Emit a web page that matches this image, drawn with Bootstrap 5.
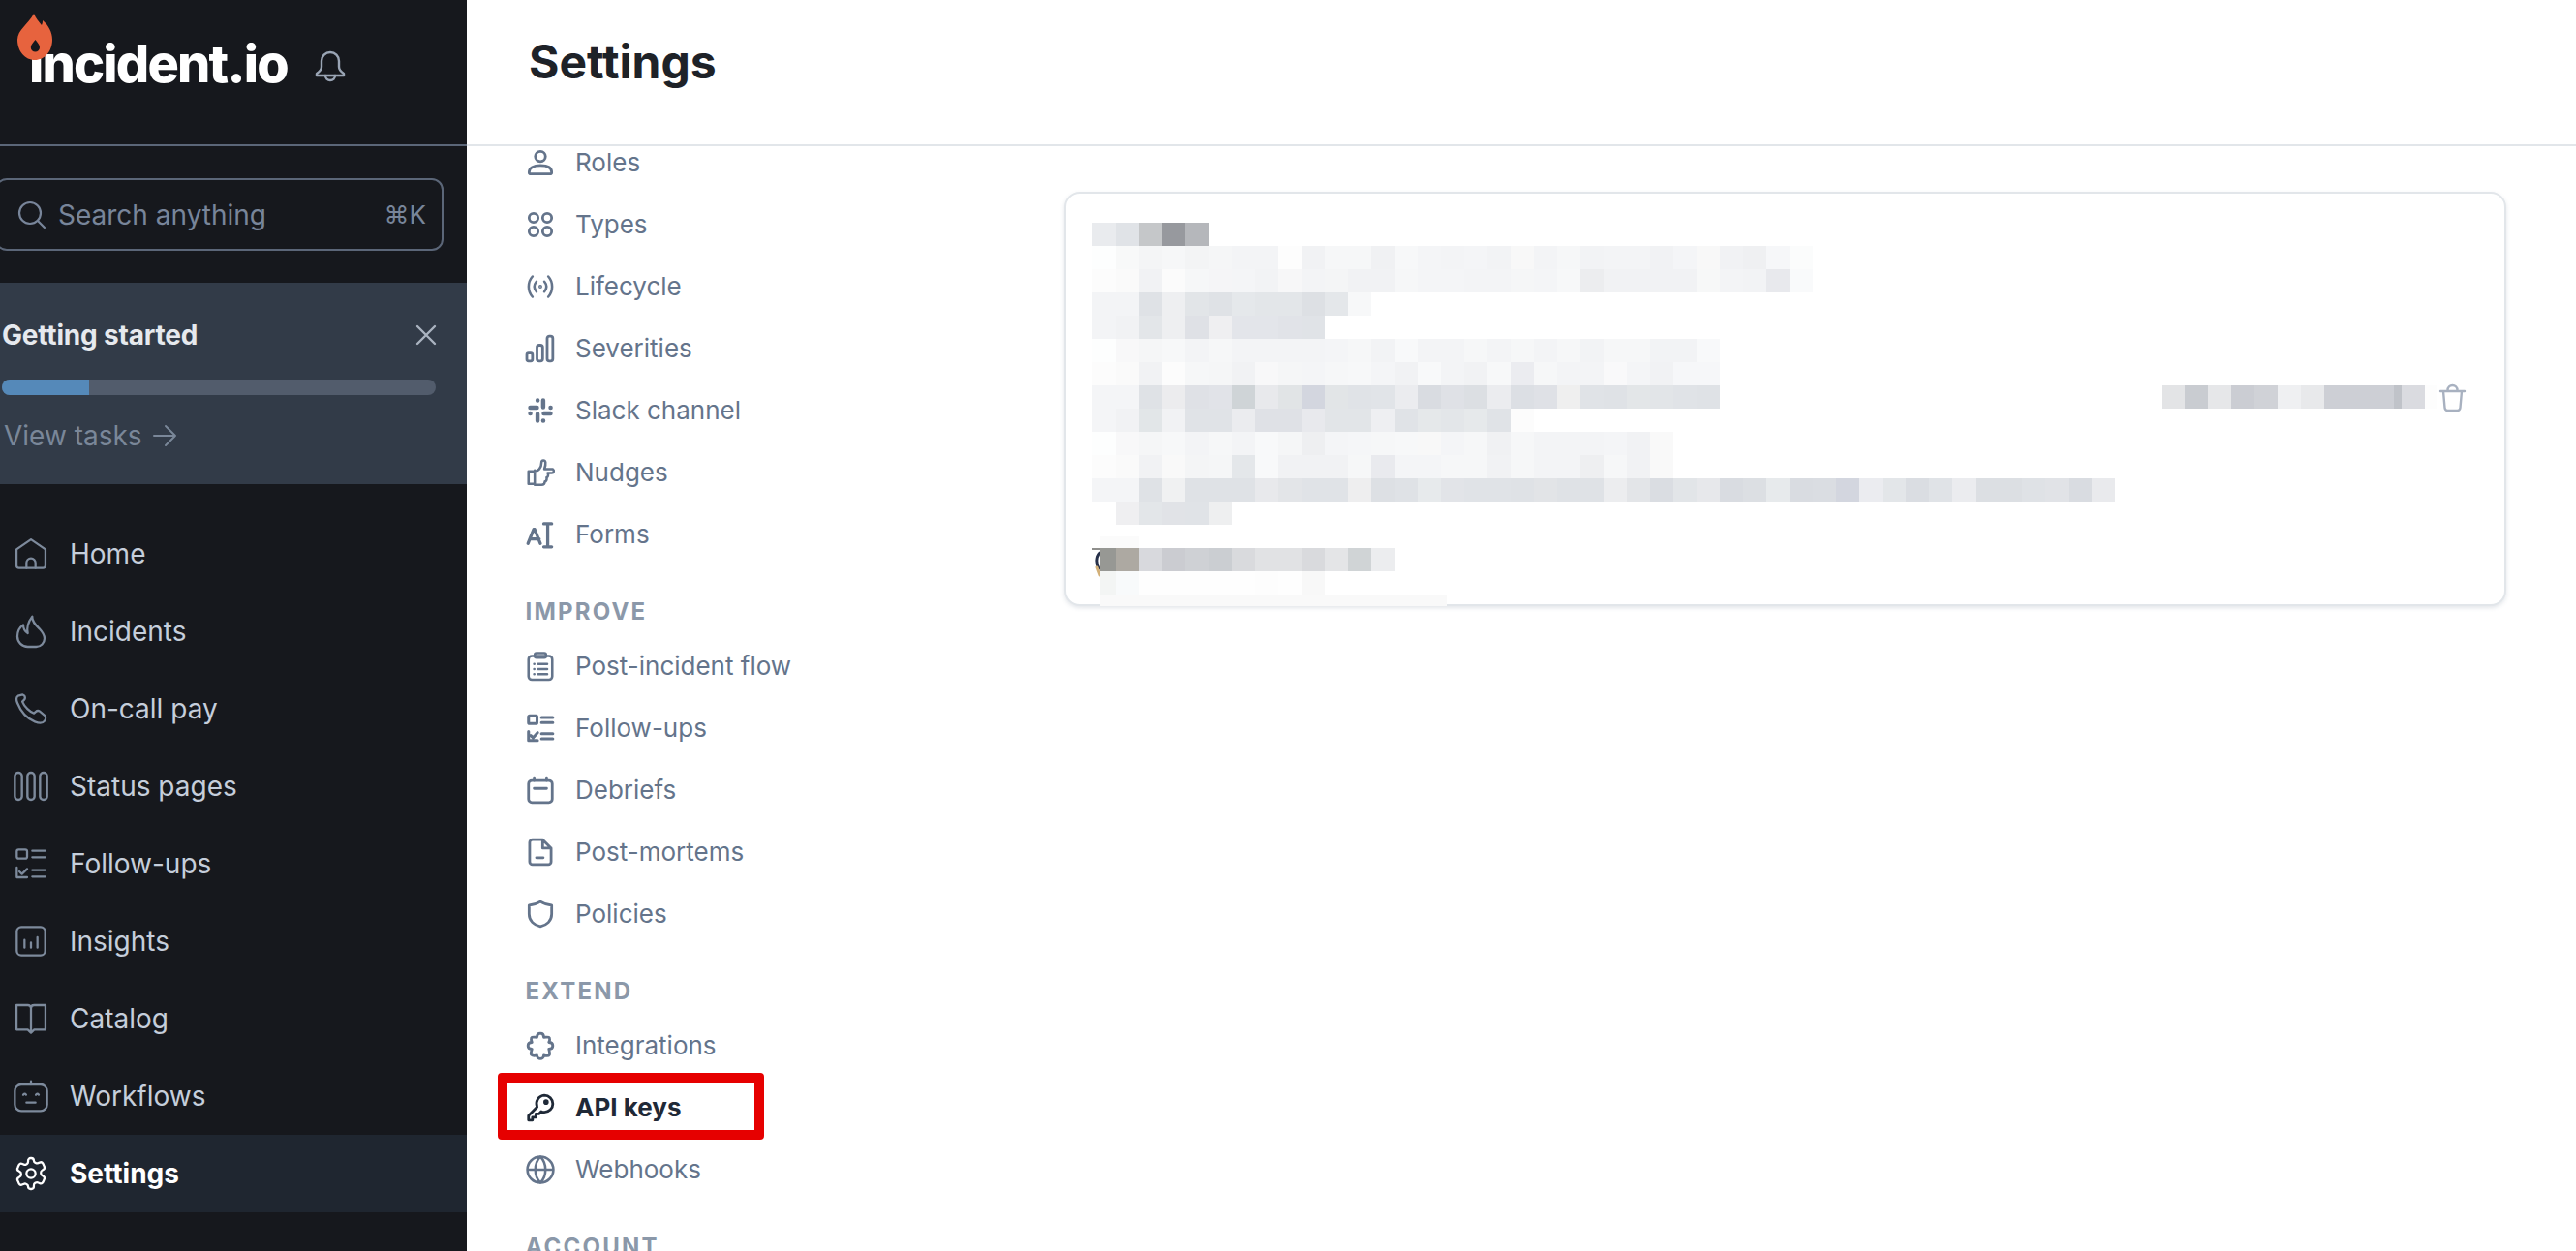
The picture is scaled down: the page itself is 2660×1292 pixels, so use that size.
<!DOCTYPE html>
<html lang="en">
<head>
<meta charset="utf-8">
<title>Settings</title>
<link href="https://cdn.jsdelivr.net/npm/bootstrap@5.3.0/dist/css/bootstrap.min.css" rel="stylesheet">
<style>
html,body{height:100%;overflow:hidden;background:#fff;font-family:Inter,"Noto Sans",sans-serif}
.app-shell{height:1292px}
svg{flex:none;overflow:visible;fill:none;stroke:currentColor;stroke-linecap:round;stroke-linejoin:round}
.side-bar{width:482px;background:#16181d;flex:none}
.side-head{height:151px;border-bottom:2px solid #5b6678;padding-left:30px;padding-top:32px}
.brand-name{font-size:54px;font-weight:800;letter-spacing:-1.8px;color:#fff;line-height:68px;width:268px;white-space:nowrap}
.brand-flame{position:absolute;left:-12px;top:-18px;width:36px;height:48px;stroke:none}
.bell-ico{width:32px;height:32px;color:#9aa5b5;margin-left:27px;margin-top:20px}
.search-box{height:75px;width:463px;margin:33px 0 33px -5px;border:2px solid #5b6678;border-radius:12px;padding:0 16px 0 22px;color:#78859a;font-size:28px}
.search-box svg{width:28px;height:28px;margin-right:13px}
.search-key{font-size:26px}
.start-panel{height:208px;background:#323b48;padding:33px 32px 0 2px}
.start-title{font-size:28px;font-weight:700;letter-spacing:-.2px;line-height:42px;color:#e6e9ee}
.start-close{width:24px;height:24px;color:#aab3c0;margin-right:-2px}
.start-track{height:16px;margin-top:25px;background:#525c6c;border-radius:8px;overflow:hidden}
.start-fill{height:100%;width:20%;background:#5589b9}
.start-link{font-size:28px;line-height:42px;margin-top:21px;padding-left:2px;color:#7a8799}
.start-link svg{width:26px;height:26px;margin-left:10px}
.side-links{margin-top:32px}
.side-row{height:80px;padding-left:16px;gap:24px;font-size:28px;color:#c5cedb}
.side-row svg{width:32px;height:32px;color:#7d8a9c}
.side-row.is-on{background:#1f2630;color:#fff;font-weight:700}
.side-row.is-on svg{color:#fff}
.main-pane{min-width:0}
.main-head{height:153px;border-bottom:2px solid #e2e6ea;padding:0 0 20px 64px;font-size:48px;font-weight:700;color:#1e2228}
.main-body{min-height:0;overflow:hidden}
.sub-nav{width:617px;flex:none;padding-left:62px;margin-top:-15px}
.sub-row{height:64px;gap:22px;font-size:26px;color:#64748b;position:relative}
.sub-row svg{width:28px;height:28px}
.sub-row.is-on{color:#1f2937;font-weight:700}
.sub-label{height:36px;margin:30px 0 6px -1.5px;line-height:36px;font-size:24px;font-weight:700;letter-spacing:2.2px;color:#8b98a9}
.mark-box{position:absolute;left:-30px;top:-4px;width:275px;height:69px;border:10px solid #e60000;border-radius:4px;box-shadow:inset 0 1px 0 #8d8d8d;pointer-events:none}
.key-panel{width:1489px;height:428px;margin-top:47px;background:#fff;border:2px solid #e2e6ea;border-radius:16px;box-shadow:0 2px 4px rgba(100,116,139,.18);padding:30px 0 0 27px}
.blur-row{height:24px}
.blur-cell{width:24px;height:100%;flex:none}
.blur-gap{height:12px}
.blur-faint{height:12px;width:40px;margin-left:8px;background:#fbfbfb}
.blur-foot{margin-left:8px}
.blur-tail{height:12px}
.trash-ico{width:27px;height:27px;color:#a8b1c0;margin:0 40px 0 3px}
.avatar-bit{position:absolute;left:-8px;top:0;width:8px;height:30px;overflow:hidden}
</style>
</head>
<body>
<div class="app-shell d-flex">
  <aside class="side-bar d-flex flex-column">
    <div class="side-head d-flex align-items-start">
      <div class="brand-name position-relative">incident.io
        <svg class="brand-flame" viewBox="0 0 36 48"><path fill="#e7633e" d="M17 0c2 5 5 8 8 12 .8-1.500 1-3 1-5 6 5 10 12 10 20 0 12-8 21-18 21S0 39 0 27C0 17 11 11 17 0Z"/><path fill="#16181d" d="M18.500 27c2.500 3 4.500 5.500 4.500 8a4.600 4.600 0 0 1-9.200 0c0-2.500 2.200-5 4.700-8Z"/></svg>
      </div>
      <svg class="bell-ico" viewBox="0 0 32 32" stroke-width="2.400"><path d="M16 2a9 9 0 0 0-9 9v6c0 3-2 5-5 7v2h28v-2c-3-2-5-4-5-7v-6a9 9 0 0 0-9-9Z"/><path d="M11 26a5 5 0 0 0 10 0"/></svg>
    </div>
    <div class="search-box d-flex align-items-center">
      <svg viewBox="0 0 28 28" stroke-width="2.200"><circle cx="12" cy="12" r="11"/><path d="m20 20 7 7"/></svg>
      <span class="flex-grow-1">Search anything</span>
      <span class="search-key">⌘K</span>
    </div>
    <div class="start-panel">
      <div class="d-flex justify-content-between align-items-center">
        <span class="start-title">Getting started</span>
        <svg class="start-close" viewBox="0 0 24 24" stroke-width="2.400"><path d="m3 3 18 18M21 3 3 21"/></svg>
      </div>
      <div class="start-track"><div class="start-fill"></div></div>
      <div class="start-link d-flex align-items-center">View tasks
        <svg viewBox="0 0 26 26" stroke-width="2"><path d="M2 13h22M14 3l10 10-10 10"/></svg>
      </div>
    </div>
    <nav class="side-links">
      <div class="side-row d-flex align-items-center"><svg viewBox="0 0 24 24" stroke-width="1.700"><path d="M.8 8.500 12 .8l11.200 7.700V21a2 2 0 0 1-2 2H2.800a2 2 0 0 1-2-2Z"/><path d="M8.500 23v-4a3.500 3.500 0 0 1 7 0v4"/></svg>Home</div>
      <div class="side-row d-flex align-items-center"><svg viewBox="0 0 24 24" stroke-width="1.700"><path d="M13 .5c-.5 3.500 2.500 6.500 5.500 9.500 2.200 2.400 4 4.500 4 7.500A6.500 6.500 0 0 1 16 24H9.500a8 8 0 0 1-8-8C1.500 12 3 9 6 7c0 3 1 5 3.500 6.500C8.500 9 10 4.500 13 .5Z"/></svg>Incidents</div>
      <div class="side-row d-flex align-items-center"><svg viewBox="0 0 24 24" stroke-width="1.700"><path d="M5.500 1 2 2c-1.500 1-1.500 3-.5 5.500 2.500 6.500 7.500 12 13.500 14.500 3 1.200 6 1.500 7.500-.5.800-1 1.200-3 .3-4.200l-4-3.300c-1-.7-2.300-.5-3.200.3l-1.300 1.200c-3-1-7.500-5-9-9l1.500-1.500c.7-.8.700-2 .2-3L5.500 1Z"/></svg>On-call pay</div>
      <div class="side-row d-flex align-items-center"><svg viewBox="0 0 24 24" stroke-width="1.800"><rect x="-.5" y="1.500" width="5.500" height="21" rx="2.700"/><rect x="9.250" y="1.500" width="5.500" height="21" rx="2.700"/><rect x="19" y="1.500" width="5.500" height="21" rx="2.700"/></svg>Status pages</div>
      <div class="side-row d-flex align-items-center"><svg viewBox="0 0 24 24" stroke-width="1.700"><rect x="1" y="1" width="8" height="7" rx="1.500"/><path d="M13 2h10M13 7h10M13 17h10M13 22h10M1 15v7.500h8M3 18l2 2 4-4"/></svg>Follow-ups</div>
      <div class="side-row d-flex align-items-center"><svg viewBox="0 0 24 24" stroke-width="1.700"><rect x="1" y="1" width="22" height="22" rx="3.500"/><path d="M7 11v6M12 13v4M17 9v8"/></svg>Insights</div>
      <div class="side-row d-flex align-items-center"><svg viewBox="0 0 24 24" stroke-width="1.700"><path d="M12 4v18M12 4c0-1.500-1-2.500-2.500-2.500H.8V20.500h8.700L12 23l2.500-2.500h8.700V1.500h-8.700C13 1.500 12 2.500 12 4Z"/></svg>Catalog</div>
      <div class="side-row d-flex align-items-center"><svg viewBox="0 0 24 24" stroke-width="1.700"><rect x="-.5" y="3" width="25" height="20.500" rx="5"/><path d="M12 .500V3M6 11c.5-1 1.500-1 2.200 0M15.800 11c.5-1 1.500-1 2.200 0M8.500 17h7"/></svg>Workflows</div>
      <div class="side-row is-on d-flex align-items-center"><svg viewBox="0 0 24 24" stroke-width="1.700"><path d="M12.220 0h-.44a2 2 0 0 0-2 2v.9a2 2 0 0 1-1 1.730l-.43.250a2 2 0 0 1-2 0l-.9-.3a2 2 0 0 0-2.730.730l-.9 2a2 2 0 0 0 .730 2.730l.8.500a2 2 0 0 1 1 1.720v.510a2 2 0 0 1-1 1.740l-.8.500a2 2 0 0 0-.730 2.730l.9 2a2 2 0 0 0 2.730.730l.9-.3a2 2 0 0 1 2 0l.43.250a2 2 0 0 1 1 1.730V22a2 2 0 0 0 2 2h.44a2 2 0 0 0 2-2v-.9a2 2 0 0 1 1-1.730l.43-.250a2 2 0 0 1 2 0l.9.300a2 2 0 0 0 2.730-.730l.9-2a2 2 0 0 0-.730-2.730l-.8-.500a2 2 0 0 1-1-1.740v-.5a2 2 0 0 1 1-1.740l.8-.500a2 2 0 0 0 .730-2.730l-.9-2a2 2 0 0 0-2.730-.730l-.9.300a2 2 0 0 1-2 0l-.43-.250a2 2 0 0 1-1-1.730V2a2 2 0 0 0-2-2Z"/><circle cx="12" cy="12" r="3.500"/></svg>Settings</div>
    </nav>
  </aside>
  <main class="main-pane flex-grow-1 d-flex flex-column">
    <header class="main-head d-flex align-items-center">Settings</header>
    <div class="main-body d-flex flex-grow-1">
      <nav class="sub-nav">
        <div class="sub-row d-flex align-items-center"><svg viewBox="0 0 24 24" stroke-width="2.400"><circle cx="12" cy="6.500" r="4.500"/><path d="M2 20.500c0-4 4-6 10-6s10 2 10 6c0 1-.5 1.500-1.500 1.500h-17C2.500 22 2 21.500 2 20.500Z"/></svg>Roles</div>
        <div class="sub-row d-flex align-items-center"><svg viewBox="0 0 24 24" stroke-width="2.400"><circle cx="6" cy="6" r="4"/><circle cx="18" cy="6" r="4"/><circle cx="6" cy="18" r="4"/><circle cx="18" cy="18" r="4"/></svg>Types</div>
        <div class="sub-row d-flex align-items-center"><svg viewBox="0 0 24 24" stroke-width="2.200"><path d="M5 3C.5 8 .5 16 5 21M19 3c4.500 5 4.500 13 0 18M8.500 7.500c-2.500 3-2.500 6 0 9M15.500 7.500c2.500 3 2.500 6 0 9"/><circle cx="12" cy="12" r=".6"/></svg>Lifecycle</div>
        <div class="sub-row d-flex align-items-center"><svg viewBox="0 0 24 24" stroke-width="2.400"><rect x="0" y="16" width="5" height="7" rx="1.500"/><rect x="9" y="9" width="5" height="14" rx="2"/><rect x="18" y="1" width="5" height="22" rx="2"/></svg>Severities</div>
        <div class="sub-row d-flex align-items-center"><svg viewBox="0 0 24 24" stroke-width="3.800"><path d="M3 9.500h6M9.500 3h.1M14.500 3v6M21 9.500h.1M15 14.500h6M14.500 21h.1M9.500 15v6M3 14.500h.1"/></svg>Slack channel</div>
        <div class="sub-row d-flex align-items-center"><svg viewBox="0 0 24 24" stroke-width="2.200"><path d="M7 10v12H1.500V11H7c3 0 6-3 6-8 0-2 3-2.500 3.500 0 .3 2-.3 4-1 6H23c1.500 1 1 3.500-1 3.500h-3.500c1 2 0 3.500-1 4 .5 2-.5 3.500-1.500 3.500 0 2-1 3-3 3H7"/></svg>Nudges</div>
        <div class="sub-row d-flex align-items-center"><svg viewBox="0 0 24 24" stroke-width="2.800"><path d="M1 20 6 7.500h1L12 20M3 16h8M15 2.500h7M15 23h7M18.500 2.500V23"/></svg>Forms</div>
        <div class="sub-label">IMPROVE</div>
        <div class="sub-row d-flex align-items-center"><svg viewBox="0 0 24 24" stroke-width="2.200"><rect x="1.500" y="3" width="21" height="21" rx="3"/><rect x="7" y="0.500" width="10" height="4" rx="1.500"/><path d="M10 10h8M10 14.500h8M10 19h8M6.500 10h.1M6.500 14.500h.1M6.500 19h.1"/></svg>Post-incident flow</div>
        <div class="sub-row d-flex align-items-center"><svg viewBox="0 0 24 24" stroke-width="2.600"><rect x="1.500" y="1" width="7.500" height="7" rx="1"/><path d="M13 2.500h10M13 7h10M13 17h10M13 21.500h10M1.500 15v8h8M3.500 18.500l2 2 4-4.500"/></svg>Follow-ups</div>
        <div class="sub-row d-flex align-items-center"><svg viewBox="0 0 24 24" stroke-width="2.400"><rect x="1.500" y="3.500" width="21" height="19.500" rx="3"/><path d="M6.500 1v2.500M17.500 1v2.500M6.500 10.500h11"/></svg>Debriefs</div>
        <div class="sub-row d-flex align-items-center"><svg viewBox="0 0 24 24" stroke-width="2.400"><path d="M14 1H5a2.500 2.500 0 0 0-2.500 2.500v17A2.500 2.500 0 0 0 5 23h14a2.500 2.500 0 0 0 2.500-2.500V8.500L14 1Zm0 0v7.500h7.500M8.500 17h6"/></svg>Post-mortems</div>
        <div class="sub-row d-flex align-items-center"><svg viewBox="0 0 24 24" stroke-width="2.400"><path d="M12 1c3 2 6.500 3 10 3.200V12c0 6-4.500 10-10 11C6.500 22 2 18 2 12V4.200C5.500 4 9 3 12 1Z"/></svg>Policies</div>
        <div class="sub-label">EXTEND</div>
        <div class="sub-row d-flex align-items-center"><svg viewBox="0 0 24 24" stroke-width="2.400"><path d="M9 4.500C9 2 10.500 1 12 1s3 1 3 3.500c3 0 4.500-.5 5 .5s0 3-.5 4c2.500 0 3.500 1.500 3.500 3s-1 3-3.500 3c.5 2 1 4 .5 5s-3 1-5 .5c0 2-1.500 3-3 3s-3-1-3-3c-2 .5-4 .5-5-.5s0-3 .5-5C1.500 15 1 13.500 1 12s1-3 3.500-3c-.5-1.500-1-3-.5-4s2.500-.5 5-.5Z"/></svg>Integrations</div>
        <div class="sub-row is-on d-flex align-items-center"><svg viewBox="0 0 24 24" stroke-width="2.400"><path d="M15.500 1a7.500 7.500 0 0 1 0 15c-1 0-2-.2-2.800-.6l-2 2.100H8v3H5v2.500H1.500V19l7.600-7.700A7.500 7.500 0 0 1 15.500 1Z"/><circle cx="17" cy="7" r="1.200"/></svg>API keys<span class="mark-box"></span></div>
        <div class="sub-row d-flex align-items-center"><svg viewBox="0 0 24 24" stroke-width="2.200"><circle cx="12" cy="12" r="11.500"/><path d="M1 12h22M12 .5c-6 6-6 17 0 23M12 .5c6 6 6 17 0 23"/></svg>Webhooks</div>
        <div class="sub-label">ACCOUNT</div>
      </nav>
      <section class="flex-grow-1">
        <div class="key-panel" id="keyPanel"></div>
      </section>
    </div>
  </main>
</div>
<script>
var trash='<svg class="trash-ico" viewBox="0 0 27 27" stroke-width="2.400"><path d="M1 6h25M8.500 6V5a5 5 0 0 1 10 0v1M4 6l1.500 17a3 3 0 0 0 3 3h10a3 3 0 0 0 3-3L23 6"/></svg>';
var rows=[
"e9ebee e0e3e7 c5c7c9 97999e b5b7bb",
"fdfefe f8f9f9 f4f5f6 f6f7f8 f3f4f5 f5f6f7 f3f4f6 f3f4f6 fdfdfd f1f2f4 f6f7f8 f6f7f8 f0f1f3 f7f8f9 f4f5f7 f3f4f6 f4f5f7 f2f3f5 f8f8f8 f3f4f6 f6f7f8 f2f3f5 f3f4f6 f3f4f6 f1f2f4 f4f5f7 f8f8f8 f1f2f4 eff0f2 f6f7f9 fbfcfc",
"fcfcfc fafafa f1f2f4 fbfbfb f6f7f8 f5f5f7 f4f5f7 f2f3f5 f7f7f8 f3f4f6 f4f5f6 f1f2f4 f1f2f4 f6f7f8 f4f5f7 f4f5f7 f3f4f6 f3f4f6 f5f6f7 f4f5f7 f7f8f9 ecedef f1f2f4 f1f2f4 f1f2f4 f1f2f4 f7f8f8 f3f4f6 f2f3f5 e8e9ed f9fafb",
"f3f4f6 f3f4f6 dfe2e6 eeeff1 e2e5e8 dfe2e6 e5e8eb e3e6e9 e3e6e9 dde0e4 e4e7ea f7f8f9",
"f3f4f6 f1f2f4 e3e6e9 eeeff1 dfe1e6 efeff1 e3e5ea e3e5ea e1e3e8 e0e3e7",
"fdfefe f8f8f9 f5f6f7 f7f8f9 f3f4f6 f6f7f8 f3f4f6 f3f4f6 f3f4f6 f3f4f6 f4f5f7 f6f7f8 f2f3f5 f8f9fa f3f4f6 f3f4f6 f6f7f8 f3f4f6 f6f7f8 f3f4f6 f6f7f8 f2f3f5 f6f7f8 f6f7f8 f2f3f5 f2f3f5 f8f9fa",
"fcfcfc fafafa f1f2f4 fcfcfc f6f7f8 f5f6f7 f1f2f4 f8f8f9 f5f6f7 f4f5f7 f6f7f8 f7f8f9 f4f5f7 f1f2f4 f8f9fa f3f4f6 f1f2f4 f7f8f9 ebecf0 f6f7f8 f3f4f6 f3f4f6 f9f9fa f4f5f7 f1f2f4 f6f7f9 f6f7f9",
"f4f5f7 f4f5f7 dfe2e6 ececee dfe1e6 e1e3e8 cfd4d7 e8e9ec e1e4e6 d3d6df e2e5e7 e0e3e7 e1e4e8 ebecef d9dce1 dfe1e6 dcdfe3 ebecef dcdfe4 dfe1e6 efefef e0e3e7 dfe2e6 e3e6e8 e2e5e8 e0e3e7 dfe2e6",
"f4f5f7 f1f2f4 e2e6e8 f1f2f4 e0e3e7 e0e3e7 ebecef dfe1e6 dfe1e6 e8e9ed e2e5e8 e2e5e8 eeeff2 e0e3e7 e5e8ea e3e6e9 e6e9eb e0e3e7 fcfcfc",
"fdfefe f8f8f9 f5f6f7 f7f8f9 f3f4f6 f6f7f8 f3f4f6 f8f9fa f5f6f7 eeeff1 f4f5f7 f5f6f8 f6f7f8 f7f8f9 f8f8f8 f4f5f7 f6f7f8 f0f1f3 f6f7f8 f3f4f6 f3f4f6 f3f4f6 f4f5f7 f1f2f4 f9f9f9",
"fcfcfc fafafa f1f2f4 f9f9f9 f4f5f6 f5f6f7 e4e7ea f8f9fa f1f2f4 f1f2f4 f1f2f4 f6f7f8 e9eaee f4f5f7 f4f5f7 f6f7f8 f6f7f8 f1f2f4 f6f7f8 f3f4f6 f3f4f6 eeeff1 f6f7f8 f1f2f4 f9f9f9",
"f4f5f7 f4f5f7 dfe2e6 f0f1f2 dfe2e6 dfe2e6 dfe2e6 e8e9ec e3e5e8 e0e3e7 e0e3e7 eeeeef dde0e4 dfe2e6 e7eaec e2e4e8 e0e3e7 e0e3e7 dfe2e6 e2e4e7 dfe2e6 dfe2e6 ecedef e3e5e8 dadde2 e2e5e8 e7e8eb d9dce1 dcdfe3 e7eaec d9dce1 dadde2 d3d6df ebecf0 e3e6e9 dadde2 e0e3e7 ebecef dcdfe3 dcdfe3 dfe2e6 e1e3e7 d9dce1 e9eaed",
"ffffff efeff1 e3e6e9 e1e3e7 e0e3e7 eeeff0"
];
var right="e3e4e6 c9ccd1 e6e7e9 cbcdd3 d0d2d7 eff0f2 e8e9eb cdcfd5 cdcfd5 cdcfd5 c0c3c9:8 dadbe0 fdfdfd:12";
function cells(str){return str.split(" ").map(function(s){var p=s.split(":");return '<div class="blur-cell" style="background:#'+p[0]+(p[1]?';width:'+p[1]+'px':'')+'"></div>';}).join("");}
var html=rows.map(function(r,i){return '<div class="blur-row d-flex">'+cells(r)+(i===7?'<div class="ms-auto d-flex h-100">'+cells(right)+trash+'</div>':'')+'</div>';}).join("");
html+='<div class="blur-gap"></div><div class="blur-faint"></div>';
html+='<div class="blur-foot position-relative"><div class="avatar-bit"><svg width="8" height="30" viewBox="0 0 8 30"><rect width="8" height="2" fill="#8f8f8c" stroke="none"/><path d="M8 5C4 9 4 16 7 21" stroke="#27314a" stroke-width="3"/><path d="M5 20l3 8" stroke="#d3b078" stroke-width="3"/></svg></div>';
html+='<div class="blur-row d-flex">'+cells("979894:16 ada9a2 d8d9dd cbccd1 cfd1d5 cbced2 d9dadd e1e2e4 e1e2e4 d9dadd e4e5e7 d0d4d6 ecedef")+'</div>';
html+='<div class="blur-row d-flex">'+cells("f3f5f4:16 f8fafb fefefe fefefe fefefe fefefe fefefe fdfdfd fefefe f8f8f8")+'</div>';
html+='<div class="blur-tail d-flex">'+cells("f9f9f9:358")+'</div></div>';
document.getElementById("keyPanel").innerHTML=html;
</script>
<script src="https://cdn.jsdelivr.net/npm/bootstrap@5.3.0/dist/js/bootstrap.bundle.min.js"></script>
</body>
</html>
